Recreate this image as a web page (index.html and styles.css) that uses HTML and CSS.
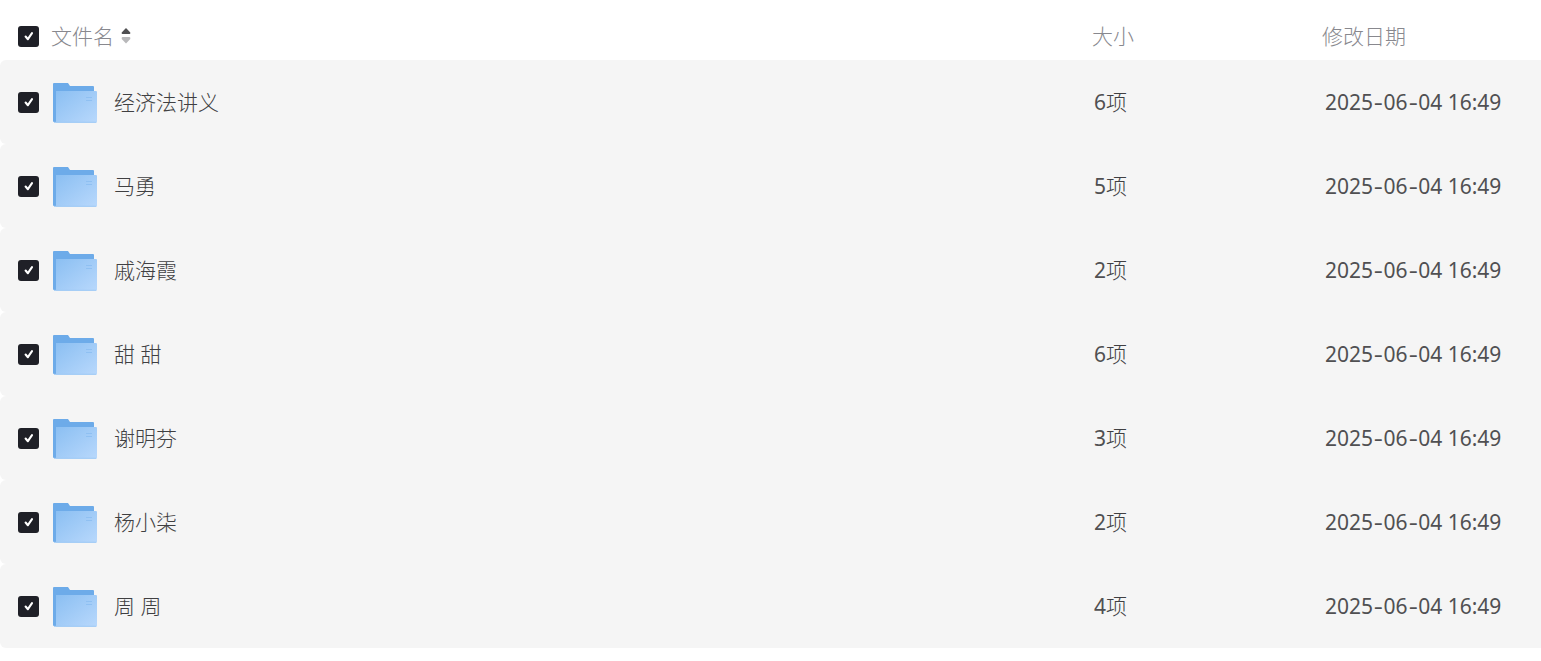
FILE: index.html
```
<!DOCTYPE html>
<html lang="zh-CN">
<head>
<meta charset="utf-8">
<title>文件列表</title>
<link rel="stylesheet" href="styles.css">
</head>
<body>
<svg class="defs" aria-hidden="true">
  <defs>
    <linearGradient id="front" x1="0" y1="0" x2="1" y2="1">
      <stop offset="0" stop-color="#8bbff2"/>
      <stop offset="1" stop-color="#b8d8fc"/>
    </linearGradient>
    <symbol id="check" viewBox="0 0 21 21">
      <path d="M7.6 10.5 9.9 13.2 14 7.2" fill="none" stroke="#fff" stroke-width="2.1" stroke-linecap="round" stroke-linejoin="round"/>
    </symbol>
    <symbol id="folder" viewBox="0 0 44 40">
      <path d="M1 0H15L17 3H40Q41 3 41 4V39H1Q0 39 0 38V1Q0 0 1 0Z" fill="#6dabe9"/>
      <path d="M3 8H43Q44 8 44 9V38.5Q44 39.5 43 39.5H3Z" fill="url(#front)"/>
      <path d="M1 39.3H43.3" stroke="#9bc8f5" stroke-width="1"/>
      <path d="M33 14.5H39M33 17.5H39" stroke="#8fc0f2" stroke-width="1"/>
    </symbol>
  </defs>
</svg>
<main class="list">
  <header class="row head">
    <svg class="box"><use href="#check"/></svg>
    <div class="title">文件名<svg class="sort" viewBox="0 0 10 16"><path d="M5 0 9.3 4.5Q9.6 6 8.5 6H1.5Q.4 6 .7 4.5Z" fill="#4f4f51"/><path d="M5 15.5 9.3 11Q9.6 9 8.5 9H1.5Q.4 9 .7 11Z" fill="#b8b8ba"/></svg></div>
    <div class="size">大小</div>
    <div class="date">修改日期</div>
  </header>
  <div class="row item"><svg class="box"><use href="#check"/></svg><svg class="folder"><use href="#folder"/></svg><div class="name">经济法讲义</div><div class="size"><span class="num">6</span>项</div><div class="date">2025<i>-</i>06<i>-</i>04 16:49</div></div>
  <div class="row item"><svg class="box"><use href="#check"/></svg><svg class="folder"><use href="#folder"/></svg><div class="name">马勇</div><div class="size"><span class="num">5</span>项</div><div class="date">2025<i>-</i>06<i>-</i>04 16:49</div></div>
  <div class="row item"><svg class="box"><use href="#check"/></svg><svg class="folder"><use href="#folder"/></svg><div class="name">戚海霞</div><div class="size"><span class="num">2</span>项</div><div class="date">2025<i>-</i>06<i>-</i>04 16:49</div></div>
  <div class="row item"><svg class="box"><use href="#check"/></svg><svg class="folder"><use href="#folder"/></svg><div class="name">甜 甜</div><div class="size"><span class="num">6</span>项</div><div class="date">2025<i>-</i>06<i>-</i>04 16:49</div></div>
  <div class="row item"><svg class="box"><use href="#check"/></svg><svg class="folder"><use href="#folder"/></svg><div class="name">谢明芬</div><div class="size"><span class="num">3</span>项</div><div class="date">2025<i>-</i>06<i>-</i>04 16:49</div></div>
  <div class="row item"><svg class="box"><use href="#check"/></svg><svg class="folder"><use href="#folder"/></svg><div class="name">杨小柒</div><div class="size"><span class="num">2</span>项</div><div class="date">2025<i>-</i>06<i>-</i>04 16:49</div></div>
  <div class="row item"><svg class="box"><use href="#check"/></svg><svg class="folder"><use href="#folder"/></svg><div class="name">周 周</div><div class="size"><span class="num">4</span>项</div><div class="date">2025<i>-</i>06<i>-</i>04 16:49</div></div>
</main>
</body>
</html>
```
FILE: styles.css
```
body {
  margin: 0;
  background: #fff;
  overflow: hidden;
  font-family: "Noto Sans", "Noto Sans CJK SC", sans-serif;
  font-size: 21px;
  font-weight: 300;
  line-height: 30px;
  color: #505052;
}
.defs { position: absolute; width: 0; height: 0; }
.list { padding-top: 12px; }
.row {
  display: flex;
  align-items: center;
  box-sizing: border-box;
  padding-left: 18px;
  white-space: nowrap;
}
.head { height: 48px; color: #88888e; }
.item {
  height: 84px;
  background: #f5f5f5;
  border-radius: 6px 0 0 6px;
}
.box {
  flex: none;
  width: 21px;
  height: 21px;
  border-radius: 3px;
  background: #1f2027;
}
.folder {
  flex: none;
  width: 44px;
  height: 40px;
  margin: 2px 17px 0 14px;
}
.name { flex: 1; }
.name, .item .size { color: #404042; }
.title {
  flex: 1;
  display: flex;
  align-items: center;
  margin-left: 12px;
}
.sort { width: 10px; height: 16px; margin-left: 7px; }
.size { width: 230px; }
.date { width: 219px; }
.num { font-weight: 400; color: #505052; }
.item .date { width: 216px; font-weight: 400; }
.item .size { width: 231px; }
.date i {
  display: inline-block;
  font-style: normal;
  margin: 0 1.9px;
  transform: scaleX(1.35);
}
```
